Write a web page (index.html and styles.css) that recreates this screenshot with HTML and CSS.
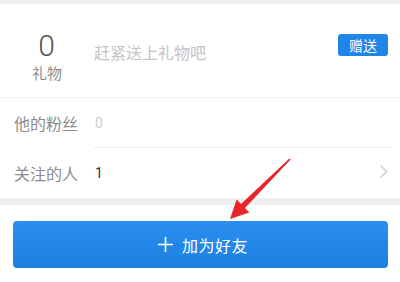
FILE: index.html
```html
<!DOCTYPE html>
<html lang="zh">
<head>
<meta charset="utf-8">
<link rel="stylesheet" href="styles.css">
</head>
<body>
<div class="page">
  <div class="gap-top"></div>
  <section class="card">
    <div class="gift-row">
      <div class="gift-count">
        <div class="count-num">0</div>
        <div class="count-label">礼物</div>
      </div>
      <div class="gift-hint">赶紧送上礼物吧</div>
      <button class="send-btn">赠送</button>
    </div>
    <div class="info-row">
      <span class="info-label">他的粉丝</span>
      <span class="info-value muted">0</span>
    </div>
    <div class="info-row last">
      <span class="info-label">关注的人</span>
      <span class="info-value">1</span>
      <svg class="chev" width="9" height="15" viewBox="0 0 9 15"><path d="M1.5 1.5 L7.5 7.5 L1.5 13.5" fill="none" stroke="#cfcfcf" stroke-width="1.5"/></svg>
    </div>
  </section>
  <div class="gap-mid"></div>
  <footer class="footer">
    <button class="add-btn">
      <svg class="plus" width="15" height="15" viewBox="0 0 15 15"><path d="M7.5 0 V15 M0 7.5 H15" stroke="#fff" stroke-width="1.6"/></svg>
      <span>加为好友</span>
    </button>
  </footer>
  <svg class="arrow" width="400" height="282" viewBox="0 0 400 282">
    <polygon points="290.6,159.4 289.4,158.6 241,204 236.6,199.6 230,219 249.4,212.4 245,208" fill="#e8252a"/>
  </svg>
</div>
</body>
</html>
```
FILE: styles.css
```css
html, body {
  margin: 0;
  padding: 0;
  background: #ffffff;
}
body {
  font-family: "Noto Sans CJK SC", "Noto Sans", sans-serif;
}
.page {
  position: relative;
  width: 400px;
  height: 282px;
  overflow: hidden;
  background: #ffffff;
}
.gap-top {
  height: 4px;
  background: #efefef;
}
.card {
  background: #ffffff;
}
.gift-row {
  height: 94px;
  display: flex;
  align-items: flex-start;
  border-bottom: 1px solid #f0f0f0;
  padding-right: 12px;
  box-sizing: border-box;
}
.gift-count {
  width: 93px;
  display: flex;
  flex-direction: column;
  align-items: center;
  padding-top: 24px;
}
.count-num {
  font-family: Roboto, sans-serif;
  font-weight: 300;
  font-size: 30px;
  line-height: 35px;
  color: #555555;
}
.count-label {
  font-size: 15px;
  line-height: 20px;
  margin-top: 0;
  color: #8c8c8c;
  padding-left: 1px;
}
.gift-hint {
  flex: 1;
  margin-top: 37px;
  font-size: 16px;
  line-height: 22px;
  color: #c4c4c4;
  padding-left: 1px;
}
.send-btn {
  margin-top: 30px;
  width: 50px;
  height: 22px;
  padding: 0;
  border: none;
  border-radius: 3px;
  background: #1f85e6;
  color: #ffffff;
  font-family: "Noto Sans CJK SC", sans-serif;
  font-size: 14px;
  line-height: 22px;
}
.info-row {
  height: 50px;
  display: flex;
  align-items: center;
  padding-left: 14px;
  position: relative;
}
.info-row::after {
  content: "";
  position: absolute;
  left: 93px;
  right: 8px;
  bottom: 0;
  height: 1px;
  background: #f0f0f0;
}
.info-row.last::after {
  display: none;
}
.info-label {
  width: 81px;
  font-size: 16px;
  line-height: 22px;
  color: #8c8c8c;
}
.info-value {
  flex: 1;
  font-family: Roboto, sans-serif;
  font-size: 14px;
  color: #333333;
}
.info-value.muted {
  color: #cccccc;
}
.chev {
  margin-right: 12px;
  margin-top: -4px;
}
.gap-mid {
  height: 7px;
  background: #efefef;
}
.footer {
  padding: 16px 12px 0 13px;
}
.add-btn {
  width: 100%;
  height: 47px;
  border: none;
  border-radius: 4px;
  background: linear-gradient(#2a8ff0, #1b80e2);
  color: #ffffff;
  display: flex;
  align-items: center;
  justify-content: center;
  gap: 9px;
  padding: 0 0 0 5px;
  font-family: "Noto Sans CJK SC", sans-serif;
  font-size: 16px;
  letter-spacing: 0.5px;
}
.arrow {
  position: absolute;
  left: 0;
  top: 0;
  pointer-events: none;
}
```
